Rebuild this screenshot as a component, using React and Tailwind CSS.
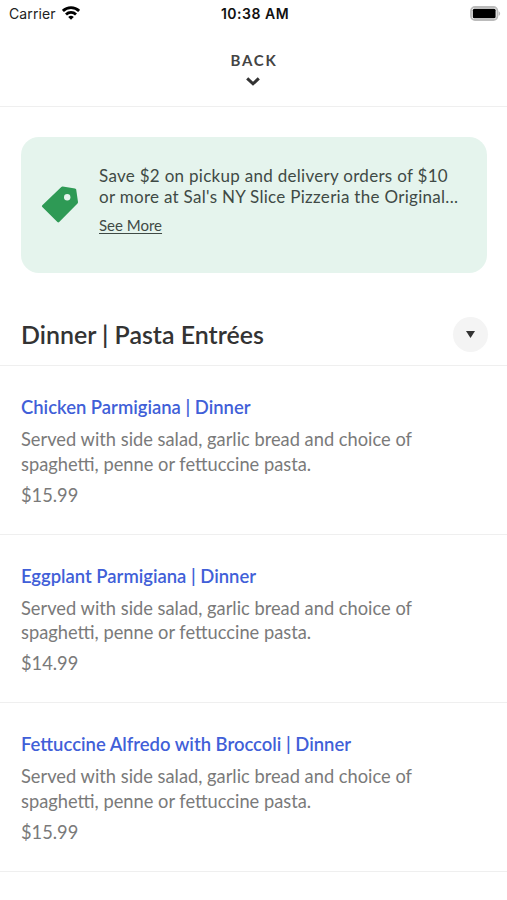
const items = [
  {
    name: 'Chicken Parmigiana | Dinner',
    price: '$15.99',
  },
  {
    name: 'Eggplant Parmigiana | Dinner',
    price: '$14.99',
  },
  {
    name: 'Fettuccine Alfredo with Broccoli | Dinner',
    price: '$15.99',
  },
];

function StatusBar() {
  return (
    <div className="flex h-[27px] items-center justify-between pr-[6px] pl-[9px] font-['Inter',sans-serif] text-[14px] text-black">
      <div className="flex w-[158px] items-center gap-[6px]">
        <span className="tracking-[0.1px] text-[#222]">Carrier</span>
        <svg className="-mt-[2px]" width="18" height="14" viewBox="0 0 18 14" fill="none" stroke="#000" strokeWidth="2.8">
          <path d="M.9 4.9a11.5 11.5 0 0 1 16.2 0" />
          <path d="M4 8.4a7.2 7.2 0 0 1 10 0" />
          <path d="M9 13.8 6.2 11a4 4 0 0 1 5.6 0z" fill="#000" stroke="none" />
        </svg>
      </div>
      <span className="font-semibold tracking-[0.5px] text-[#111]">10:38 AM</span>
      <div className="flex w-[158px] justify-end">
        <svg className="-mt-px" width="31" height="15" viewBox="0 0 31 15">
          <rect x="1" y="1" width="26.4" height="13" rx="4" fill="none" stroke="#bbb" strokeWidth="1.8" />
          <rect x="2.8" y="2.8" width="22.8" height="9.4" rx="1.5" />
          <path d="M28.6 5.2v4.6c2-.8 2-3.8 0-4.6z" fill="#bbb" />
        </svg>
      </div>
    </div>
  );
}

function MenuItem({ item }) {
  return (
    <li className="h-[168.6px] border-b border-[#efefef] px-[21px] pt-[29px]">
      <h3 className="text-[18.45px] leading-[25px] font-semibold text-[#415fd8]">{item.name}</h3>
      <p className="mt-[7px] text-[18.3px] leading-[24.5px] text-[#7a7a7a]">
        Served with side salad, garlic bread and choice of
        <br />
        spaghetti, penne or fettuccine pasta.
      </p>
      <p className="mt-[6.5px] text-[18.3px] leading-[25px] text-[#7a7a7a]">{item.price}</p>
    </li>
  );
}

export default function App() {
  return (
    <div className="h-[900px] w-[507px] overflow-hidden bg-white font-['Lato',sans-serif] text-[#333]">
      <StatusBar />
      <header className="flex h-[80px] flex-col items-center border-b border-[#efefef] pt-[23px]">
        <span className="pl-px text-[15px] leading-[20px] font-bold tracking-[1.8px] text-[#444]">BACK</span>
        <svg className="mt-[7px] mr-px" width="14" height="10" viewBox="0 0 14 10" fill="none" stroke="#333" strokeWidth="3">
          <path d="m1.2 1.3 5.8 5.5 5.8-5.5" />
        </svg>
      </header>

      <section className="mt-[30px] mr-[20px] ml-[21px] flex h-[136px] rounded-[18px] bg-[#e5f4ed] pt-[28px] pl-[20px]">
        <svg className="mt-[21px] shrink-0" width="38" height="38" viewBox="0 0 38 38">
          <path
            fill="#2e9a55"
            d="M20.3 1q.6-.5 1.400-.4L34 2.400q1 .2 1.200 1.200l1.800 12.400q.1.900-.5 1.500L18.200 36q-.9.900-1.800 0L1.300 21q-.9-.9 0-1.800z"
          />
          <circle cx="26.2" cy="11.2" r="3.2" fill="#e5f4ed" />
        </svg>
        <div className="ml-[20px] whitespace-nowrap text-[#3f4a45]">
          <p className="text-[17px] leading-[21px] tracking-[0.29px]">
            Save $2 on pickup and delivery orders of $10
            <br />
            or more at Sal's NY Slice Pizzeria the Original...
          </p>
          <a className="mt-[8px] block text-[15px] leading-[20px] underline underline-offset-2">See More</a>
        </div>
      </section>

      <div className="mt-[30px] flex h-[63px] items-center justify-between border-b border-[#efefef] pr-[19px] pl-[21px]">
        <h2 className="mt-[2px] text-[24.95px] font-semibold">Dinner | Pasta Entrées</h2>
        <button className="flex h-[35px] w-[35px] items-center justify-center rounded-full bg-[#f4f4f4]">
          <svg className="mt-px" width="9" height="7" viewBox="0 0 9 7">
            <path d="M0 0h9L4.5 7z" fill="#333" />
          </svg>
        </button>
      </div>

      <ul>
        {items.map((item) => (
          <MenuItem key={item.name} item={item} />
        ))}
      </ul>
    </div>
  );
}
